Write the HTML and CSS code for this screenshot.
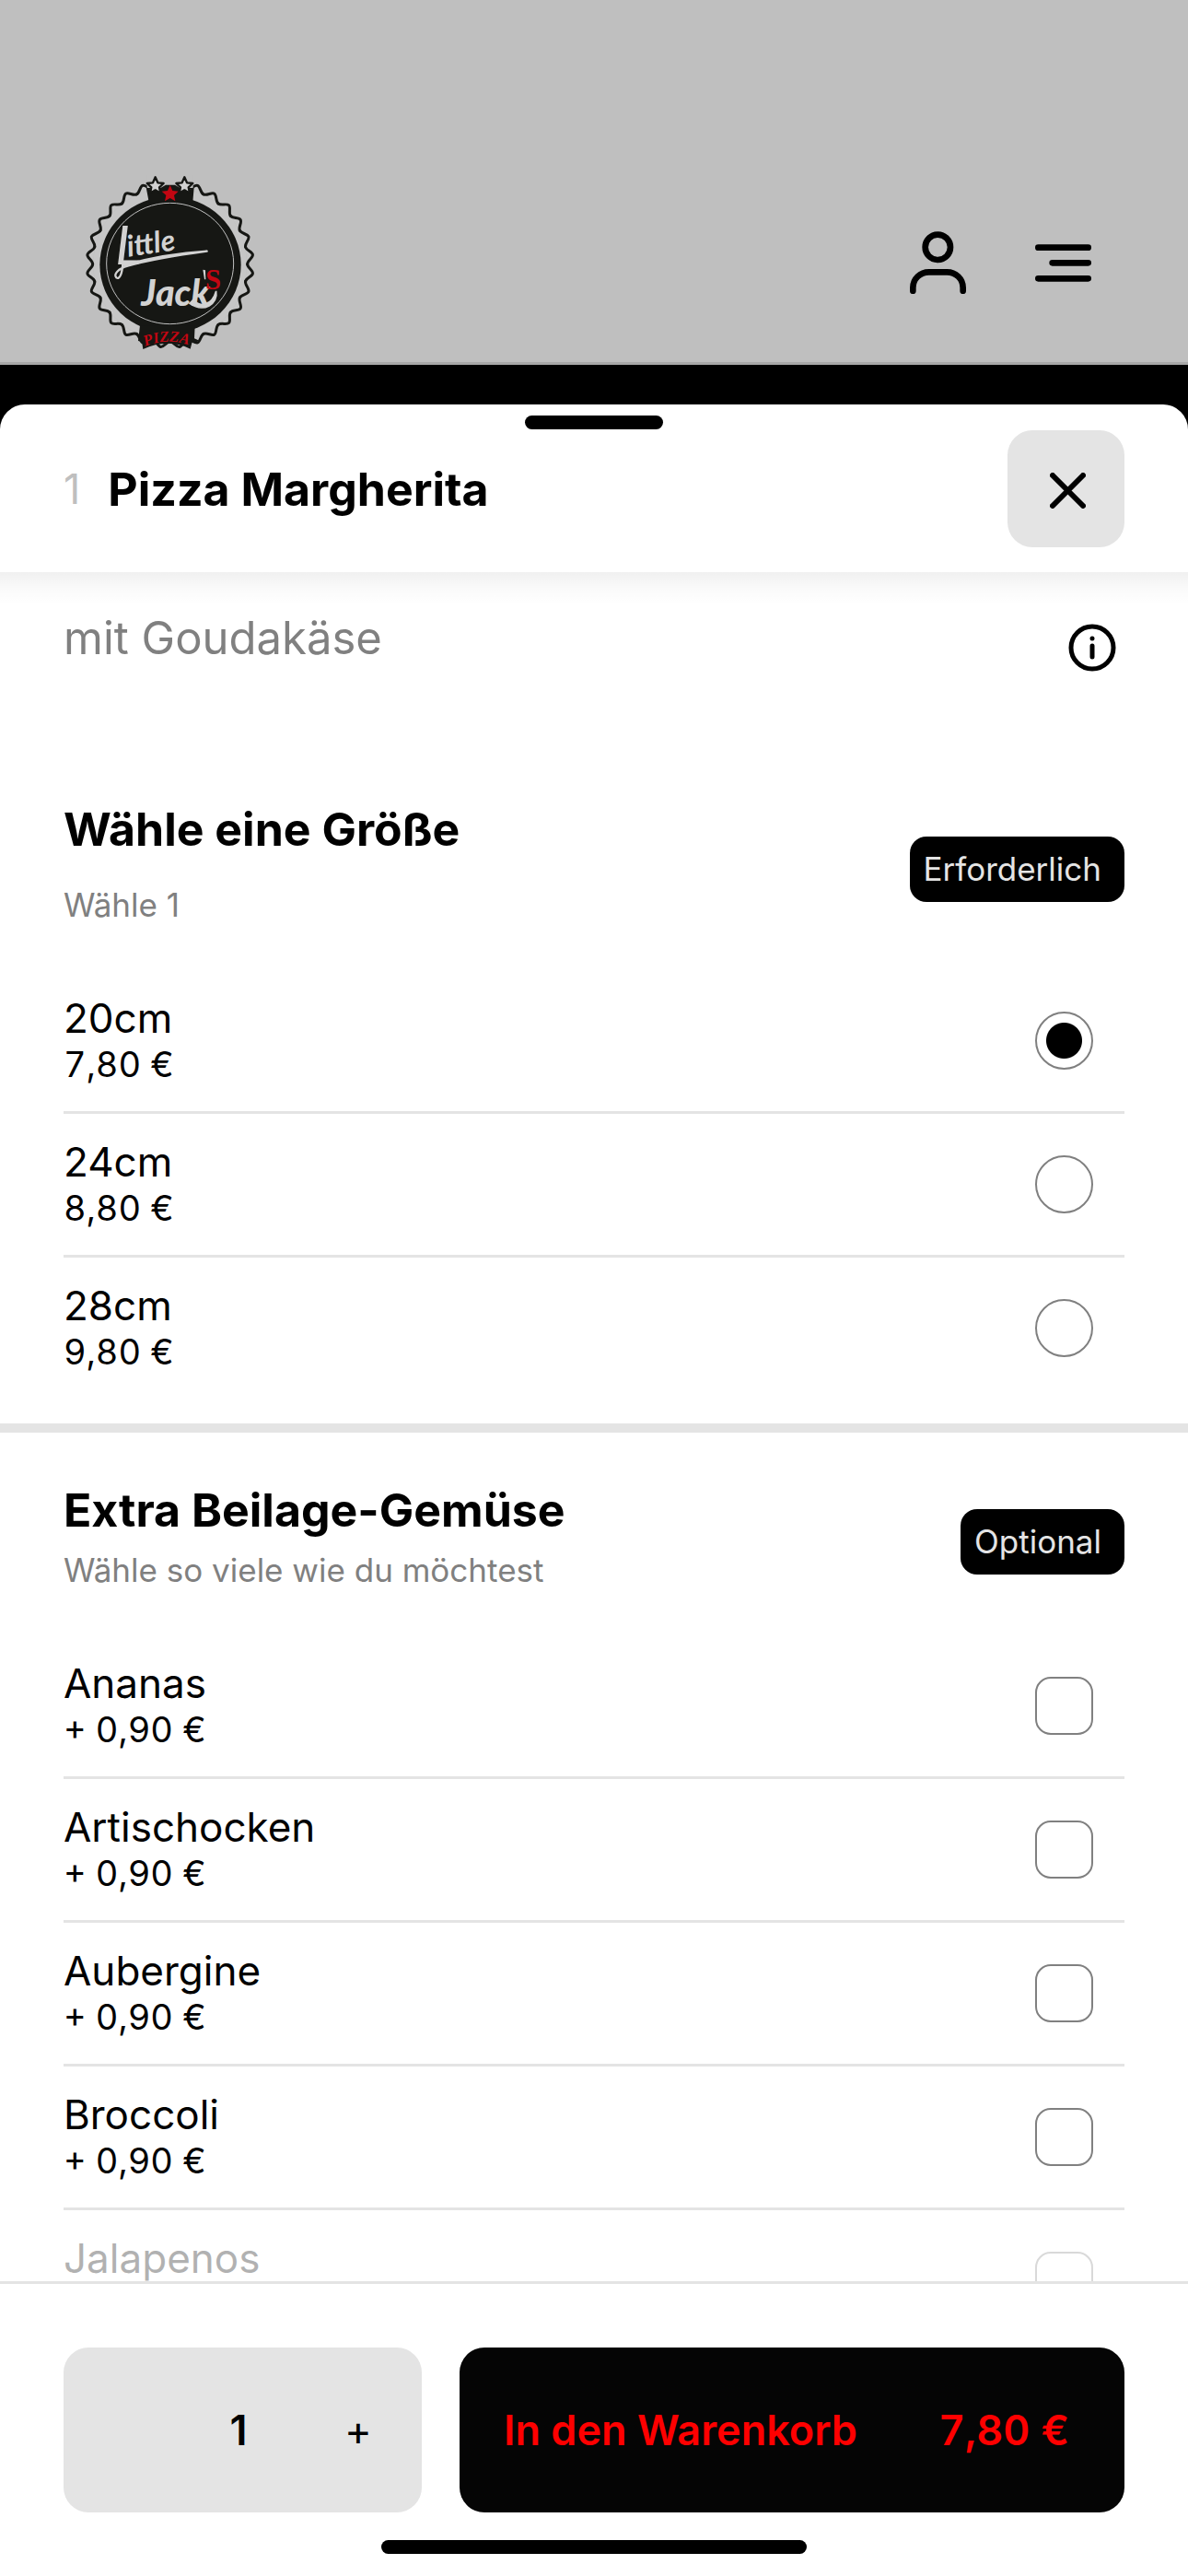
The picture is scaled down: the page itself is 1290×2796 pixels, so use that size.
FILE: index.html
```html
<!DOCTYPE html>
<html lang="de">
<head>
    <meta charset="UTF-8">
    <meta name="viewport" content="width=device-width, initial-scale=1.0">
    <title>Little Jack's Pizza</title>
    <link rel="stylesheet" href="styles.css">
</head>
<body>
    <header class="site-header">
        <a class="logo" href="#" aria-label="Little Jack's Pizza">
            <svg viewBox="0 0 630 630">
                <defs>
                    <path id="tooth" d="M0-252C12-252 20.400-270.400 30.300-269.300C40.200-268.200 44.400-248.400 56.100-245.700"/>
                    <g id="teeth">
                        <use href="#tooth"/>
                        <use href="#tooth" transform="rotate(12.857)"/>
                        <use href="#tooth" transform="rotate(25.714)"/>
                        <use href="#tooth" transform="rotate(38.571)"/>
                    </g>
                    <path id="star" d="M0-29L8-11L27-9L13 4L17 23L0 13L-17 23L-13 4L-27-9L-8-11Z"/>
                    <path id="banner-line" d="M233 588Q310 556 392 590"/>
                </defs>
                <circle cx="314" cy="320" r="250" fill="#c6c6c6"/>
                <g transform="translate(314 320)" fill="#c6c6c6" stroke="#161714" stroke-width="9" stroke-linecap="round">
                    <use href="#teeth"/>
                    <use href="#teeth" transform="rotate(51.428)"/>
                    <use href="#teeth" transform="rotate(102.857)"/>
                    <use href="#teeth" transform="rotate(154.285)"/>
                    <use href="#teeth" transform="rotate(205.714)"/>
                    <use href="#teeth" transform="rotate(257.142)"/>
                    <use href="#teeth" transform="rotate(308.571)"/>
                </g>
                <path d="M239 28H389V72H239Z" fill="#bfbfbf"/>
                <ellipse cx="315" cy="322" rx="230" ry="222" fill="#161714"/>
                <ellipse cx="314" cy="318" rx="207" ry="197" fill="none" stroke="#c0c0c0" stroke-width="3"/>
                <path d="M236 70L262 84L300 62L330 62L366 84L392 70L388 118L245 118Z" fill="#161714"/>
                <g fill="#d2d2d2" stroke="#161714" stroke-width="7" stroke-linejoin="round">
                    <use href="#star" x="266" y="66"/>
                    <use href="#star" x="361" y="66"/>
                </g>
                <use href="#star" x="314" y="92" fill="#c20612"/>
                <path d="M216 520H395L393 562L406 568L400 577L386 574L380 596Q306 560 226 597L222 572L210 570Z" fill="#161714"/>
                <text class="logo-little" x="178" y="296" transform="rotate(-8 178 296)">ittle</text>
                <text class="logo-initial" x="136" y="322">L</text>
                <path d="M160 318C158 350 150 372 139 364C128 354 146 334 176 326C240 308 300 296 434 278C330 284 240 302 160 324" fill="none" stroke="#d2d2d2" stroke-width="7" stroke-linejoin="round"/>
                <text class="logo-jack" x="220" y="456">Jack</text>
                <path d="M390 436C410 462 450 456 464 408C472 450 424 480 378 448Z" fill="#d2d2d2" stroke="#d2d2d2" stroke-width="5"/>
                <path d="M421 338L429 340L430 370L426 370Z" fill="#d2d2d2"/>
                <text class="logo-s" x="429" y="401">S</text>
                <text class="logo-pizza"><textPath href="#banner-line">PIZZA</textPath></text>
            </svg>
        </a>
        <nav class="header-nav">
            <button class="icon-button" aria-label="Konto">
                <svg class="icon-user" viewBox="0 0 183 204" fill="none" stroke="#000" stroke-width="20" stroke-linecap="round">
                    <circle cx="91" cy="52" r="41"/>
                    <path d="M10 194V184C10 154 34 133 62 133H121C149 133 173 154 173 184V194"/>
                </svg>
            </button>
            <button class="icon-button" aria-label="Menü">
                <svg class="icon-menu" viewBox="0 0 183 123" stroke="#000" stroke-width="20" stroke-linecap="round">
                    <path d="M10 11H173M56 61H173M10 112H173"/>
                </svg>
            </button>
        </nav>
    </header>

    <main class="sheet">
        <div class="sheet-header">
            <span class="handle"></span>
            <span class="item-number">1</span>
            <h1 class="item-title">Pizza Margherita</h1>
            <button class="close" aria-label="Schließen">
                <svg viewBox="0 0 39 39" stroke="#000" stroke-width="6" stroke-linecap="round">
                    <path d="M3 3L36 36M36 3L3 36"/>
                </svg>
            </button>
        </div>

        <div class="sheet-content">
            <div class="intro">
                <p class="description">mit Goudakäse</p>
                <button class="icon-button info" aria-label="Informationen">
                    <svg viewBox="0 0 52 52" fill="none" stroke="#000" stroke-width="5" stroke-linecap="round">
                        <circle cx="26" cy="26" r="23"/>
                        <path d="M26 24V36M26 16V16"/>
                    </svg>
                </button>
            </div>

            <section class="group">
                <div class="group-header size-header">
                    <div class="group-text">
                        <h2>Wähle eine Größe</h2>
                        <p>Wähle 1</p>
                    </div>
                    <span class="badge">Erforderlich</span>
                </div>
                <label class="option">
                    <span class="option-text"><span class="name">20cm</span><span class="price">7,80 €</span></span>
                    <input type="radio" name="size" checked>
                </label>
                <label class="option">
                    <span class="option-text"><span class="name">24cm</span><span class="price">8,80 €</span></span>
                    <input type="radio" name="size">
                </label>
                <label class="option">
                    <span class="option-text"><span class="name">28cm</span><span class="price">9,80 €</span></span>
                    <input type="radio" name="size">
                </label>
            </section>

            <section class="group">
                <div class="group-header">
                    <div class="group-text">
                        <h2>Extra Beilage-Gemüse</h2>
                        <p>Wähle so viele wie du möchtest</p>
                    </div>
                    <span class="badge">Optional</span>
                </div>
                <label class="option">
                    <span class="option-text"><span class="name">Ananas</span><span class="price">+ 0,90 €</span></span>
                    <input type="checkbox" name="extra">
                </label>
                <label class="option">
                    <span class="option-text"><span class="name">Artischocken</span><span class="price">+ 0,90 €</span></span>
                    <input type="checkbox" name="extra">
                </label>
                <label class="option">
                    <span class="option-text"><span class="name">Aubergine</span><span class="price">+ 0,90 €</span></span>
                    <input type="checkbox" name="extra">
                </label>
                <label class="option">
                    <span class="option-text"><span class="name">Broccoli</span><span class="price">+ 0,90 €</span></span>
                    <input type="checkbox" name="extra">
                </label>
                <label class="option disabled">
                    <span class="option-text"><span class="name">Jalapenos</span></span>
                    <input type="checkbox" name="extra" disabled>
                </label>
            </section>
        </div>

        <footer class="sheet-footer">
            <div class="actions">
                <div class="stepper">
                    <button aria-label="Weniger" disabled></button>
                    <output class="quantity">1</output>
                    <button aria-label="Mehr">+</button>
                </div>
                <button class="add-to-cart">
                    <span>In den Warenkorb</span>
                    <span class="total">7,80 €</span>
                </button>
            </div>
            <span class="home-indicator"></span>
        </footer>
    </main>
</body>
</html>
```
FILE: styles.css
```css
* {
    box-sizing: border-box;
}
body {
    font-family: Inter, 'Liberation Sans', sans-serif;
    background-color: #000;
    color: #000;
    margin: 0;
    height: 100vh;
    display: flex;
    flex-direction: column;
}
h1, h2, p {
    margin: 0;
}
h1, h2 {
    font-size: 50px;
    line-height: 64px;
    font-weight: 700;
}
button {
    font-family: inherit;
    color: inherit;
    border: none;
    padding: 0;
    background: none;
}
svg {
    display: block;
}

/* Kopfzeile */
.site-header {
    display: flex;
    justify-content: space-between;
    align-items: center;
    padding: 180px 105px 3px 80px;
    background-color: #bfbfbf;
    border-bottom: 3px solid #a8a8a8;
}
.logo svg {
    width: 210px;
    height: 210px;
}
.logo-little, .logo-initial, .logo-jack {
    font-family: Lato, sans-serif;
    font-style: italic;
    fill: #d2d2d2;
}
.logo-little {
    font-size: 96px;
    font-weight: bold;
}
.logo-initial {
    font-size: 176px;
}
.logo-jack {
    font-size: 118px;
    font-weight: 900;
}
.logo-s, .logo-pizza {
    font-family: 'Liberation Serif', serif;
    font-weight: bold;
    fill: #c20612;
}
.logo-s {
    font-size: 92px;
}
.logo-pizza {
    font-size: 50px;
    font-style: italic;
}
.header-nav {
    display: flex;
    align-items: center;
    gap: 75px;
}
.icon-user {
    width: 61px;
    height: 68px;
}
.icon-menu {
    width: 61px;
    height: 41px;
}

/* Artikel */
.sheet {
    flex: 1;
    min-height: 0;
    margin-top: 43px;
    display: flex;
    flex-direction: column;
    background-color: #fff;
    border-radius: 27px 27px 0 0;
}
.sheet-header {
    position: relative;
    display: flex;
    align-items: center;
    gap: 30px;
    padding: 28px 69px 27px;
}
.sheet-header::after {
    content: '';
    position: absolute;
    top: 100%;
    left: 0;
    right: 0;
    height: 36px;
    background: linear-gradient(rgba(0, 0, 0, 0.06), rgba(0, 0, 0, 0.02) 50%, transparent);
}
.handle {
    position: absolute;
    top: 12px;
    left: 50%;
    width: 150px;
    height: 15px;
    margin-left: -75px;
    border-radius: 8px;
    background-color: #000;
}
.item-number {
    font-size: 45px;
    line-height: 64px;
    color: #bfbfbf;
}
.item-title {
    flex: 1;
}
.close {
    width: 127px;
    height: 127px;
    display: flex;
    justify-content: center;
    align-items: center;
    padding: 4px 0 0 4px;
    border-radius: 27px;
    background-color: #e4e4e4;
}
.close svg {
    width: 39px;
    height: 39px;
}
.sheet-content {
    flex: 1;
    min-height: 0;
    overflow: hidden;
}
.intro {
    display: flex;
    justify-content: space-between;
    align-items: flex-start;
    padding: 40px 78px 87px 69px;
}
.description {
    font-size: 49px;
    line-height: 64px;
    color: #808080;
}
.info svg {
    width: 52px;
    height: 52px;
    margin-top: 16px;
}

/* Auswahlgruppen */
.group {
    padding: 52px 69px 24px;
}
.group + .group {
    border-top: 10px solid #e4e4e4;
}
.group-header {
    display: flex;
    justify-content: space-between;
    align-items: center;
    margin-bottom: 35px;
}
.group-text {
    display: flex;
    flex-direction: column;
    gap: 9px;
    padding-bottom: 12px;
}
.size-header .group-text {
    gap: 26px;
}
.group-text p {
    font-size: 35px;
    line-height: 48px;
    color: #808080;
}
.badge {
    padding: 11px 25px 12px 15px;
    border-radius: 18px;
    background-color: #000;
    color: #e4e4e4;
    font-size: 35px;
    line-height: 48px;
}
.option {
    display: flex;
    justify-content: space-between;
    align-items: center;
    height: 156px;
    padding-right: 34px;
    border-bottom: 3px solid #e4e4e4;
}
.option:last-child {
    border-bottom-color: transparent;
}
.option-text {
    display: flex;
    flex-direction: column;
    height: 100px;
}
.name {
    font-size: 44px;
    line-height: 50px;
}
.price {
    font-size: 38px;
    line-height: 50px;
}
.price, .total {
    font-variant-numeric: tabular-nums;
}
.option input {
    appearance: none;
    width: 63px;
    height: 63px;
    margin: 0;
    border: 2px solid #808080;
    border-radius: 17px;
}
.option input[type="radio"] {
    border-radius: 50%;
}
.option input[type="radio"]:checked {
    background: radial-gradient(circle, #000 19px, transparent 20px);
}
.disabled > * {
    opacity: 0.3;
}

/* Warenkorb */
.sheet-footer {
    display: flex;
    flex-direction: column;
    align-items: center;
    gap: 30px;
    padding: 69px 69px 24px;
    border-top: 3px solid #e4e4e4;
}
.actions {
    display: flex;
    gap: 41px;
    width: 100%;
    height: 179px;
}
.stepper {
    display: grid;
    grid-template-columns: 1fr 130px 130px;
    align-items: center;
    width: 389px;
    padding-right: 4px;
    border-radius: 27px;
    background-color: #e4e4e4;
    text-align: center;
}
.stepper button {
    height: 100%;
    font-size: 45px;
}
.quantity {
    font-size: 45px;
    font-weight: 600;
}
.add-to-cart {
    flex: 1;
    display: flex;
    justify-content: space-between;
    align-items: center;
    padding: 0 60px 0 48px;
    border-radius: 27px;
    background-color: #050505;
    color: #f00;
    font-size: 45px;
    font-weight: 600;
}
.home-indicator {
    width: 462px;
    height: 15px;
    border-radius: 8px;
    background-color: #000;
}
```
